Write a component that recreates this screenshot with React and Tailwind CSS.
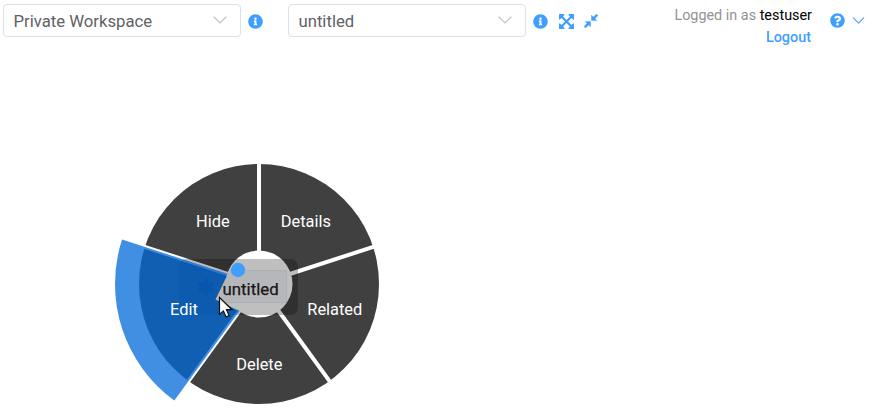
import { FaInfoCircle, FaQuestionCircle } from "react-icons/fa";

const CX = 259;
const CY = 284;
const R = 120;
const ACTIVE_R = 144;

const at = (deg, r) => {
  const a = (deg * Math.PI) / 180;
  return `${(CX + r * Math.cos(a)).toFixed(2)} ${(CY + r * Math.sin(a)).toFixed(2)}`;
};

const separators = [-90, -18, 54, 126, 198];

const labels = [
  { text: "Details", x: 305.8, y: 227 },
  { text: "Related", x: 334.8, y: 315 },
  { text: "Delete", x: 259.3, y: 370 },
  { text: "Edit", x: 184, y: 315 },
  { text: "Hide", x: 212.8, y: 227 },
];

function Chevron({ className }) {
  return (
    <svg className={className} viewBox="0 0 14 8" fill="none" stroke="currentColor" strokeWidth="1.2">
      <path d="M1 1l6 6 6-6" strokeLinecap="round" />
    </svg>
  );
}

function Expand() {
  return (
    <svg className="size-[15px]" viewBox="0 0 1536 1536" fill="currentColor">
      <path d="M1283 413l-355 355 355 355 144-144q29-31 70-14 39 17 39 59v448q0 26-19 45t-45 19h-448q-42 0-59-40-17-39 14-69l144-144-355-355-355 355 144 144q31 30 14 69-17 40-59 40h-448q-26 0-45-19t-19-45v-448q0-42 40-59 39-17 69 14l144 144 355-355-355-355-144 144q-19 19-45 19-12 0-24-5-40-17-40-59v-448q0-26 19-45t45-19h448q42 0 59 40 17 39-14 69l-144 144 355 355 355-355-144-144q-31-30-14-69 17-40 59-40h448q26 0 45 19t19 45v448q0 42-39 59-13 5-25 5-26 0-45-19z" />
    </svg>
  );
}

function Contract() {
  return (
    <svg className="size-[14px]" viewBox="0 0 14 14" fill="currentColor" stroke="currentColor" strokeWidth="0.3" strokeLinejoin="round">
      <path d="M7.4 1.1v5.5h5.5l-1.9-1.9 3-3.3L12.6 0 9.3 3z" />
      <path d="M6.6 12.9V7.4H1.1l1.9 1.9-3 3.3L1.4 14l3.3-3z" />
    </svg>
  );
}

function Select({ value }) {
  return (
    <div className="flex h-[33px] w-[238px] items-center justify-between rounded border border-[#dcdfe6] pr-[13px] pl-[9.5px] text-[#606266]">
      <span className="mt-[3px] text-[16.7px] leading-none">{value}</span>
      <Chevron className="mb-px h-2 w-[14px] text-[#c0c4cc]" />
    </div>
  );
}

function RadialMenu() {
  return (
    <svg className="block h-[363px] w-[500px]" viewBox="0 53 500 363">
      <defs>
        <mask id="hub" maskUnits="userSpaceOnUse" x="0" y="0" width="500" height="416">
          <rect width="500" height="416" fill="white" />
          <circle cx={CX} cy={CY} r="33.5" fill="black" />
          <path d="M215.5 299.5L225.9 277.9L247.5 288.3L237.1 309.9Z" fill="black" />
        </mask>
        <mask id="gaps" maskUnits="userSpaceOnUse" x="0" y="0" width="500" height="416">
          <rect width="500" height="416" fill="white" />
          {separators.map((deg) => (
            <path key={deg} d={`M${CX} ${CY}L${at(deg, 125)}`} stroke="black" strokeWidth="4" />
          ))}
        </mask>
      </defs>

      <rect x="189.5" y="270.5" width="97" height="32" fill="#f3f4fa" stroke="#eaebf5" />
      <g stroke="#409eff" strokeWidth="4.2">
        <path d="M206 279v16M199 283l14 8M213 283l-14 8" />
      </g>
      <text x="222.6" y="295" fontSize="16.8" fill="#222" stroke="#222" strokeWidth="0.25">untitled</text>
      <rect x="179" y="259" width="119" height="56" rx="7" fill="#000" fillOpacity="0.25" />

      <g mask="url(#hub)">
        <circle cx={CX} cy={CY} r={R} fill="#000" fillOpacity="0.75" mask="url(#gaps)" />
        <path
          d={`M${CX} ${CY}L${at(126, ACTIVE_R)}A${ACTIVE_R} ${ACTIVE_R} 0 0 1 ${at(198, ACTIVE_R)}Z`}
          fill="#0169d9"
          fillOpacity="0.75"
        />
      </g>

      <circle cx="238" cy="270" r="7.2" fill="#409eff" />

      <g fill="#fff" fontSize="16.4" textAnchor="middle">
        {labels.map((l) => (
          <text key={l.text} x={l.x} y={l.y}>{l.text}</text>
        ))}
      </g>

      <path
        d="M219.5 297.5v17l3.9-3.6 2.7 6 3-1.3-2.6-5.9h5.5z"
        fill="#fff"
        stroke="#111"
        strokeWidth="1.2"
      />
    </svg>
  );
}

export default function App() {
  return (
    <div className="h-[416px] w-[873px] overflow-hidden bg-white font-['Roboto',sans-serif]">
      <header className="flex h-[53px] items-start justify-between pt-1 pr-2 pl-[3px]">
        <div className="flex h-[33px] items-center text-[#409eff]">
          <Select value="Private Workspace" />
          <FaInfoCircle className="mt-px ml-[7px] size-[15px]" />
          <div className="ml-[25px]">
            <Select value="untitled" />
          </div>
          <FaInfoCircle className="mt-px ml-[7px] size-[15px]" />
          <div className="mt-px ml-[10.5px]">
            <Expand />
          </div>
          <div className="mt-px ml-[10.5px]">
            <Contract />
          </div>
        </div>
        <div className="flex text-[14.4px] leading-[22px]">
          <div className="pt-px text-right">
            <div className="text-[#909399]">
              Logged in as <span className="text-black">testuser</span>
            </div>
            <div className="pr-px font-medium text-[#409eff]">Logout</div>
          </div>
          <div className="ml-[18px] flex h-8 items-center text-[#409eff]">
            <FaQuestionCircle className="size-[15px]" />
            <Chevron className="ml-[7px] h-[7px] w-[13px]" />
          </div>
        </div>
      </header>
      <RadialMenu />
    </div>
  );
}
